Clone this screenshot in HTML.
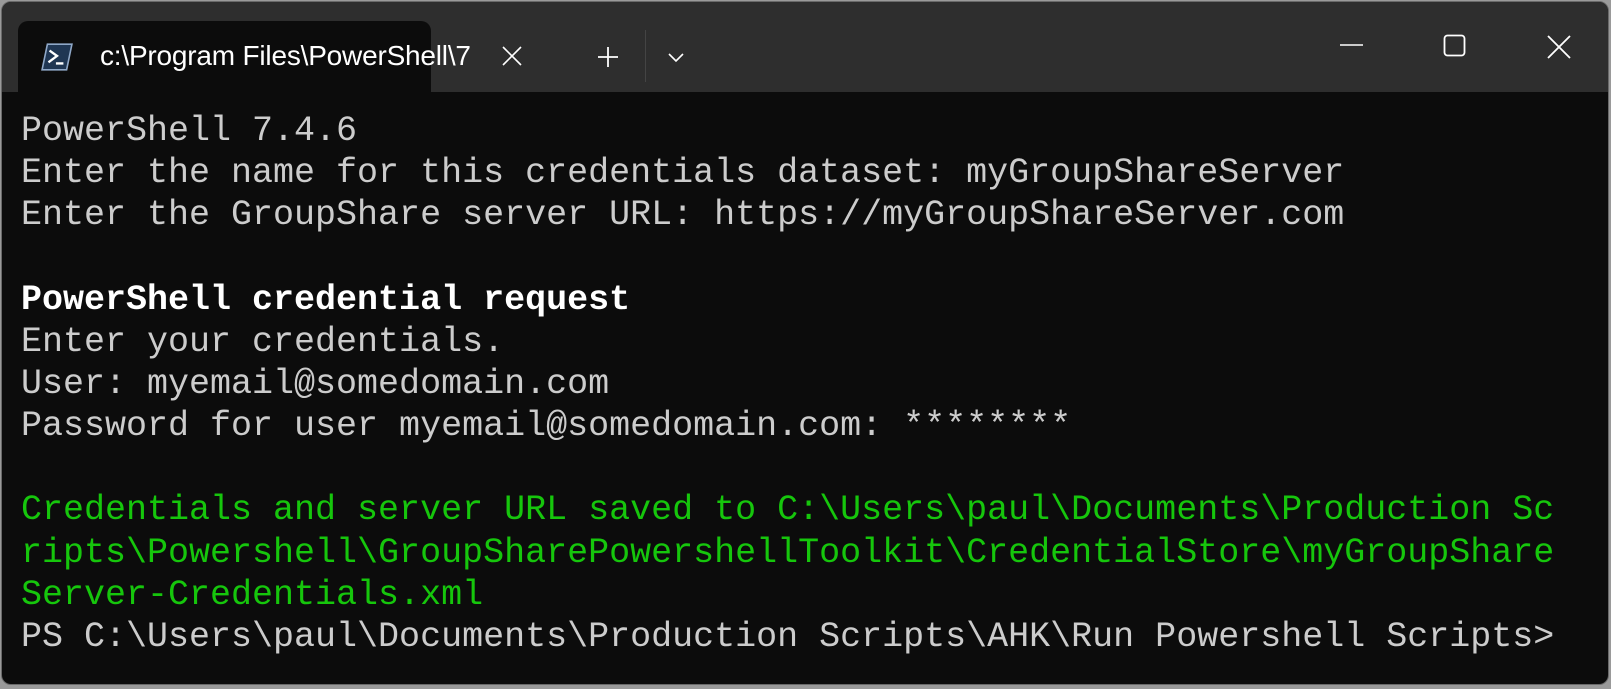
<!DOCTYPE html>
<html><head><meta charset="utf-8"><style>
html,body{margin:0;padding:0;width:1611px;height:689px;overflow:hidden;background:#9a9a9a;}
.win{position:absolute;left:1px;top:1px;width:1608px;height:684px;background:#0c0c0c;border-radius:10px;overflow:hidden;border:1px solid #6a6a6a;box-sizing:border-box;}
.bar{position:absolute;left:0;top:0;right:0;height:90px;background:#2e2e2e;}
.tab{position:absolute;left:16px;top:19px;width:413px;height:71px;background:#0c0c0c;border-radius:10px 10px 0 0;}
.tabt{position:absolute;left:98px;top:38px;font:28px "Liberation Sans",sans-serif;color:#fff;white-space:nowrap;width:372px;overflow:hidden;letter-spacing:-0.2px;}
.term{position:absolute;left:19px;top:108px;font:35px/42.15px "Liberation Mono",monospace;color:#cccccc;white-space:pre;}
.g{color:#16c60c}.b{color:#fff;font-weight:bold}
</style></head><body>
<div class="win">
<div class="bar"></div>
<div class="tab"></div>
<svg style="position:absolute;left:39px;top:41px" width="32" height="28" viewBox="0 0 30 26">
<path d="M6 1H29L24 25H1Z" fill="#1f3653" stroke="#8fa8c8" stroke-width="1.5"/>
<path d="M8 7L15 12L7 18" stroke="#fff" stroke-width="2.2" fill="none"/>
<path d="M14 19H21" stroke="#fff" stroke-width="2.2"/>
</svg>
<div class="tabt">c:\Program Files\PowerShell\7</div>
<svg style="position:absolute;left:499px;top:43px" width="22" height="22"><path d="M2 2L20 20M20 2L2 20" stroke="#fff" stroke-width="1.6"/></svg>
<svg style="position:absolute;left:595px;top:44px" width="22" height="22"><path d="M11 1V21M1 11H21" stroke="#fff" stroke-width="1.8"/></svg>
<div style="position:absolute;left:643px;top:28px;width:1px;height:52px;background:#444"></div>
<svg style="position:absolute;left:665px;top:50px" width="18" height="12"><path d="M2 2L9 9L16 2" stroke="#fff" stroke-width="1.6" fill="none"/></svg>
<svg style="position:absolute;left:1337px;top:41px" width="26" height="4"><path d="M1 2H24" stroke="#fff" stroke-width="1.6"/></svg>
<svg style="position:absolute;left:1441px;top:32px" width="24" height="24"><rect x="1.5" y="1.5" width="20" height="20" rx="3" stroke="#fff" stroke-width="1.8" fill="none"/></svg>
<svg style="position:absolute;left:1544px;top:32px" width="26" height="26"><path d="M2 2L24 24M24 2L2 24" stroke="#fff" stroke-width="1.8"/></svg>
<div class="term">PowerShell 7.4.6
Enter the name for this credentials dataset: myGroupShareServer
Enter the GroupShare server URL: https://myGroupShareServer.com

<span class="b">PowerShell credential request</span>
Enter your credentials.
User: myemail@somedomain.com
Password for user myemail@somedomain.com: ********

<span class="g">Credentials and server URL saved to C:\Users\paul\Documents\Production Sc
ripts\Powershell\GroupSharePowershellToolkit\CredentialStore\myGroupShare
Server-Credentials.xml</span>
PS C:\Users\paul\Documents\Production Scripts\AHK\Run Powershell Scripts&gt;</div>
</div>
</body></html>
